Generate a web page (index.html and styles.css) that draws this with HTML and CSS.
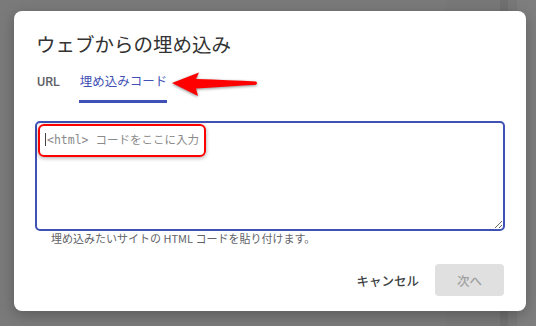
FILE: index.html
```html
<!DOCTYPE html>
<html lang="ja">
<head>
<meta charset="utf-8">
<title>ウェブからの埋め込み</title>
<link rel="stylesheet" href="styles.css">
</head>
<body>
<div class="dialog" role="dialog" aria-labelledby="dlg-title">
  <h1 class="title" id="dlg-title">ウェブからの埋め込み</h1>
  <div class="tabs">
    <div class="tab">URL</div>
    <div class="tab active">埋め込みコード</div>
    <svg class="arrow" width="100" height="34" viewBox="0 0 100 34" aria-hidden="true">
      <path d="M2 12 L29 1.5 L26 8 Q60 9 86 10.5 Q88 12 86 13.8 Q60 15.5 26 17.5 L28 25 Z" fill="#ff0000"/>
    </svg>
  </div>
  <div class="field">
    <textarea class="code" placeholder="<html> コードをここに入力"></textarea>
    <span class="caret"></span>
    <span class="highlight"></span>
  </div>
  <p class="hint">埋め込みたいサイトの HTML コードを貼り付けます。</p>
  <div class="actions">
    <button class="btn cancel">キャンセル</button>
    <button class="btn next" disabled>次へ</button>
  </div>
</div>
</body>
</html>
```
FILE: styles.css
```css
html, body {
  margin: 0;
  padding: 0;
}
body {
  width: 536px;
  height: 326px;
  overflow: hidden;
  background: linear-gradient(to right, #7a7a7a 0 446px, #787878 446px 500px, #707070 500px 508px, #787878 508px 517px, #7e7e7e 517px);
  font-family: "Noto Sans CJK JP", "Roboto", sans-serif;
  display: flex;
  align-items: flex-start;
}
.dialog {
  margin: 11px 0 0 14px;
  width: 512px;
  height: 300px;
  box-sizing: border-box;
  padding: 0 21px 0 21px;
  background: #fff;
  border-radius: 8px;
  box-shadow: 0 4px 14px rgba(0,0,0,0.25);
  display: flex;
  flex-direction: column;
}
.title {
  margin: 21px 0 0 1px;
  font-size: 19.5px;
  line-height: 24px;
  font-weight: 400;
  color: #333;
}
.tabs {
  position: relative;
  display: flex;
  gap: 19px;
  margin-top: 18px;
  padding-left: 2px;
}
.tab {
  font-family: "Roboto", "Noto Sans CJK JP", sans-serif;
  font-size: 12.5px;
  line-height: 16px;
  font-weight: 500;
  color: #5f6368;
  padding-bottom: 10px;
  border-bottom: 3px solid transparent;
}
.tab.active {
  color: #3f51b5;
  border-bottom-color: #3f51b5;
  padding-left: 1px;
  font-weight: 400;
}
.arrow {
  position: absolute;
  left: 135px;
  top: -3px;
  filter: drop-shadow(0 1px 1.5px rgba(0,0,0,0.45));
}
.field {
  position: relative;
  margin-top: 18px;
  height: 110px;
}
.code {
  display: block;
  width: 470px;
  height: 110px;
  box-sizing: border-box;
  margin: 0;
  border: 2px solid #3f51b5;
  border-radius: 5px;
  padding: 9px 10px;
  font-family: "DejaVu Sans Mono", "Noto Sans CJK JP", monospace;
  font-size: 11.5px;
  line-height: 16px;
  color: #333;
  outline: none;
  resize: vertical;
}
.code::placeholder {
  color: #8a8a8a;
}
.caret {
  position: absolute;
  left: 10px;
  top: 12px;
  width: 1px;
  height: 13px;
  background: #444;
}
.highlight {
  position: absolute;
  left: 3px;
  top: 3px;
  width: 168px;
  height: 33px;
  box-sizing: border-box;
  border: 2px solid #ff0000;
  border-radius: 6px;
  box-shadow: 0 1px 4px rgba(0,0,0,0.35);
}
.hint {
  margin: 0;
  padding-left: 16px;
  font-size: 11px;
  line-height: 14px;
  color: #5f6368;
}
.actions {
  display: flex;
  justify-content: flex-end;
  align-items: center;
  gap: 8px;
  margin-top: 19px;
  padding-right: 1px;
}
.btn {
  font-family: "Noto Sans CJK JP", "Roboto", sans-serif;
  font-size: 12.5px;
  font-weight: 500;
  height: 32px;
  border: none;
  border-radius: 4px;
  background: transparent;
  padding: 0 8px;
  margin: 0;
}
.cancel {
  color: #3c4043;
}
.next {
  width: 69px;
  padding: 0;
  background: #e0e0e0;
  color: #a2a2a2;
}
```
